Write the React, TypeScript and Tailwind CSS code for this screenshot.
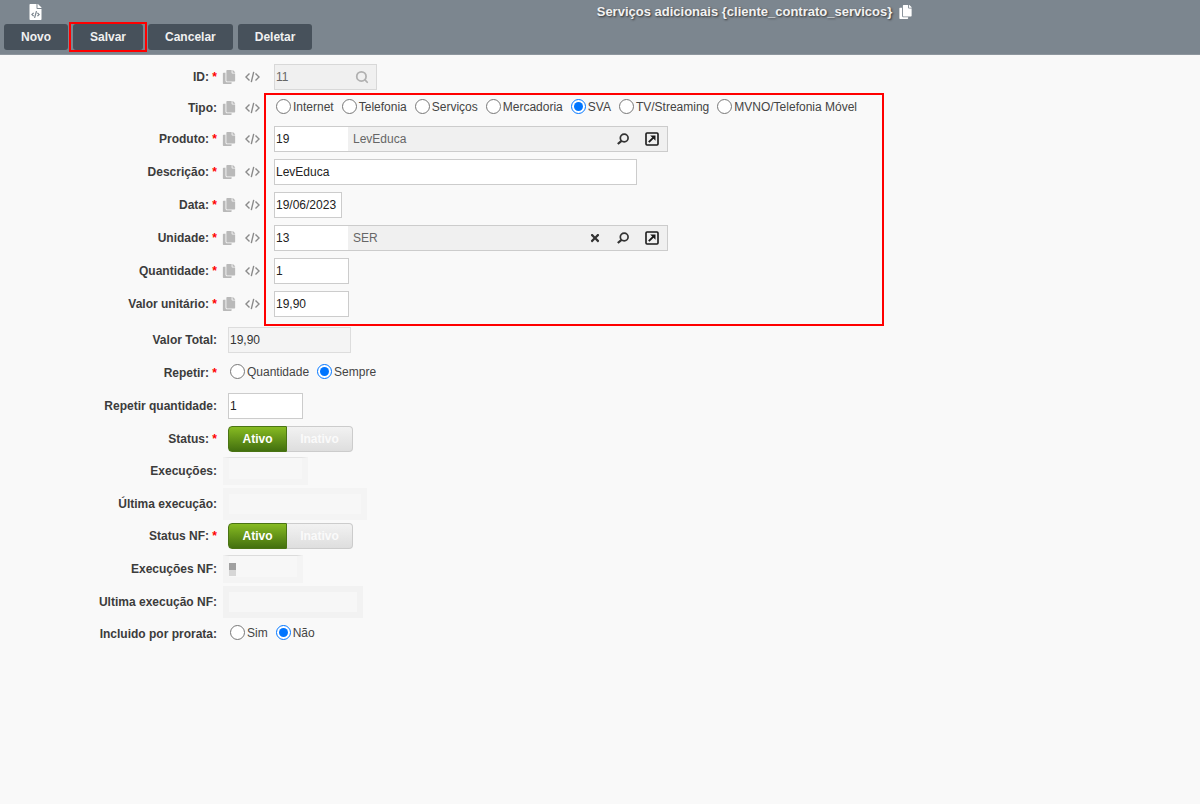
import React from 'react';
import { FaCopy, FaFileCode, FaTimes } from 'react-icons/fa';
import { Search } from 'lucide-react';

const CodeIcon = () => (
  <svg className="h-[14px] w-[15px]" viewBox="0 0 16 14" fill="none" stroke="#8a8a8a" strokeWidth="1.5">
    <path d="M4.8 3.2 1 7l3.8 3.8M11.2 3.2 15 7l-3.8 3.8M9.3 1.5 6.7 12.5" />
  </svg>
);

const LookupIcon = () => (
  <svg className="h-[12px] w-[12px]" viewBox="0 0 12 12" fill="none" stroke="#333" strokeWidth="1.7">
    <circle cx="7.2" cy="5" r="3.9" />
    <path d="M4.5 7.8 0.8 11" strokeWidth="2.2" />
  </svg>
);

const OpenIcon = () => (
  <svg className="h-[14px] w-[14px]" viewBox="0 0 14 14" fill="none" stroke="#1a1a1a" strokeWidth="1.6">
    <rect x="1" y="1" width="12" height="12" rx="1" />
    <path d="M3.8 10.2 8.6 5.4" strokeWidth="1.9" />
    <path d="M5.2 3.5h5.3v5.3z" fill="#1a1a1a" stroke="none" />
  </svg>
);

interface RowProps {
  label: string;
  htmlFor?: string;
  required?: boolean;
  tools?: boolean;
  children: React.ReactNode;
}

const Row = ({ label, htmlFor, required, tools, children }: RowProps) => (
  <div className="flex h-[26px] items-center">
    <div className="w-[217px] shrink-0 text-right text-[12px] leading-4 font-bold whitespace-nowrap text-[#3c3c3c]">
      <label htmlFor={htmlFor}>{label}:</label>
      {required && <span className="text-[#f00]"> *</span>}
    </div>
    {tools ? (
      <div className="flex w-[57px] shrink-0 items-center gap-[9px] pl-[5px]">
        <button type="button" aria-label={`Copiar ${label}`}>
          <FaCopy className="h-[14px] w-[14px] text-[#b9b9b9]" />
        </button>
        <button type="button" aria-label={`Código ${label}`}>
          <CodeIcon />
        </button>
      </div>
    ) : (
      <div className="w-[11px] shrink-0" />
    )}
    {children}
  </div>
);

const inputClass = 'h-[26px] border border-[#ccc] bg-white pl-px text-[12px] text-[#222] outline-none';

interface RadiosProps {
  name: string;
  options: string[];
  selected: string;
}

const Radios = ({ name, options, selected }: RadiosProps) => (
  <div role="radiogroup" className="flex items-center gap-2 pb-[3px] pl-[2px]">
    {options.map((option) => (
      <label key={option} className="flex items-center gap-[2px] text-[12px] whitespace-nowrap text-[#444]">
        <input type="radio" name={name} defaultChecked={option === selected} className="h-[15px] w-[15px]" />
        {option}
      </label>
    ))}
  </div>
);

interface LookupProps {
  id: string;
  code: string;
  text: string;
  clearable?: boolean;
}

const Lookup = ({ id, code, text, clearable }: LookupProps) => (
  <div className="flex h-[26px] w-[394px] items-center border border-[#ccc] bg-[#f0f0f0] pr-2">
    <input id={id} defaultValue={code} className="h-full w-[73px] bg-white pl-px text-[12px] text-[#222] outline-none" />
    <span className="flex-1 pl-[5px] text-[12px] text-[#666]">{text}</span>
    <div className="flex items-center gap-4">
      {clearable && (
        <button type="button" aria-label="Limpar">
          <FaTimes className="h-[12px] w-[12px] text-[#333]" />
        </button>
      )}
      <button type="button" aria-label="Pesquisar">
        <LookupIcon />
      </button>
      <button type="button" aria-label="Abrir">
        <OpenIcon />
      </button>
    </div>
  </div>
);

const Toggle = ({ label }: { label: string }) => (
  <div role="group" aria-label={label} className="flex h-[26px] text-[12px] font-bold">
    <button
      type="button"
      className="w-[59px] rounded-l-sm border border-[#4a7414] bg-linear-to-b from-[#87bb22] to-[#43700f] text-white"
    >
      Ativo
    </button>
    <button
      type="button"
      className="w-[66px] rounded-r-sm border border-l-0 border-[#ccc] bg-linear-to-b from-[#f2f2f2] to-[#dedede] text-[#fafafa]"
    >
      Inativo
    </button>
  </div>
);

const toolbarButton = 'h-[26px] rounded-[3px] bg-[#47515b] px-[17px] text-[12px] font-bold text-[#f0f0f0]';

export default function App() {
  return (
    <div className="min-h-screen bg-[#f9f9f9] font-['Liberation_Sans',Arial,sans-serif]">
      <header className="border-b border-[#8e969e] bg-[#7c868f] pb-1">
        <div className="flex h-6 items-center">
          <div className="w-[309px] shrink-0 pl-[29px]">
            <FaFileCode className="h-4 w-[13px] text-white" />
          </div>
          <h1 className="flex flex-1 items-center justify-center gap-[7px] text-[13px] font-bold text-[#f2f2f2] text-shadow-[1px_1px_2px_#333]">
            Serviços adicionais {'{cliente_contrato_servicos}'}
            <FaCopy className="h-[14px] w-[13px] text-white" />
          </h1>
        </div>
        <nav className="flex gap-[5px] pl-1">
          <button type="button" className={toolbarButton}>Novo</button>
          <div className="relative flex">
            <button type="button" className={toolbarButton}>Salvar</button>
            <div className="pointer-events-none absolute -inset-x-1 -inset-y-[2px] border-2 border-[#f00]" />
          </div>
          <button type="button" className={toolbarButton}>Cancelar</button>
          <button type="button" className={toolbarButton}>Deletar</button>
        </nav>
      </header>

      <form className="flex flex-col gap-[10px] pt-[9px]">
        <div className="flex flex-col gap-[5px]">
          <Row label="ID" htmlFor="id" required tools>
            <div className="flex h-[26px] w-[103px] items-center border border-[#d8d8d8] bg-[#f0f0f0] pr-[7px]">
              <input id="id" readOnly value="11" className="w-full min-w-0 bg-transparent pl-px text-[12px] text-[#666] outline-none" />
              <Search className="h-[14px] w-[14px] shrink-0 text-[#b0b0b0]" strokeWidth={3} />
            </div>
          </Row>

          {/* Highlighted fields */}
          <div className="relative flex flex-col gap-[5px]">
            <Row label="Tipo" tools>
              <Radios
                name="tipo"
                options={['Internet', 'Telefonia', 'Serviços', 'Mercadoria', 'SVA', 'TV/Streaming', 'MVNO/Telefonia Móvel']}
                selected="SVA"
              />
            </Row>
            <div className="flex flex-col gap-[7px]">
              <Row label="Produto" htmlFor="produto" required tools>
                <Lookup id="produto" code="19" text="LevEduca" />
              </Row>
              <Row label="Descrição" htmlFor="descricao" required tools>
                <input id="descricao" defaultValue="LevEduca" className={`${inputClass} w-[363px]`} />
              </Row>
              <Row label="Data" htmlFor="data" required tools>
                <input id="data" defaultValue="19/06/2023" className={`${inputClass} w-[68px]`} />
              </Row>
              <Row label="Unidade" htmlFor="unidade" required tools>
                <Lookup id="unidade" code="13" text="SER" clearable />
              </Row>
              <Row label="Quantidade" htmlFor="quantidade" required tools>
                <input id="quantidade" defaultValue="1" className={`${inputClass} w-[75px]`} />
              </Row>
              <Row label="Valor unitário" htmlFor="valor" required tools>
                <input id="valor" defaultValue="19,90" className={`${inputClass} w-[75px]`} />
              </Row>
            </div>
            <div className="pointer-events-none absolute -top-[2px] -bottom-[9px] left-[264px] w-[620px] border-2 border-[#f00]" />
          </div>
        </div>

        <div className="flex flex-col gap-[6px]">
          <div className="flex flex-col gap-[7px]">
            <Row label="Valor Total" htmlFor="total">
              <input
                id="total"
                readOnly
                value="19,90"
                className="h-[26px] w-[123px] border border-[#ddd] bg-[#f4f4f4] pl-px text-[12px] text-[#333] outline-none"
              />
            </Row>
            <Row label="Repetir" required>
              <Radios name="repetir" options={['Quantidade', 'Sempre']} selected="Sempre" />
            </Row>
            <Row label="Repetir quantidade" htmlFor="repetirQtd">
              <input id="repetirQtd" defaultValue="1" className={`${inputClass} w-[75px]`} />
            </Row>
            <Row label="Status" required>
              <Toggle label="Status" />
            </Row>
          </div>
          <div className="flex flex-col gap-[7px]">
            <Row label="Execuções" htmlFor="execucoes">
              <input id="execucoes" readOnly className="-ml-[5px] h-7 w-[85px] border-[6px] border-t border-[#f4f4f4] border-t-[#e4e4e4] bg-[#f7f7f7]" />
            </Row>
            <Row label="Última execução" htmlFor="ultima">
              <input id="ultima" readOnly className="-ml-[5px] h-8 w-[144px] border-[6px] border-[#f4f4f4] bg-[#f7f7f7]" />
            </Row>
          </div>
          <div className="flex flex-col gap-[7px]">
            <Row label="Status NF" required>
              <Toggle label="Status NF" />
            </Row>
            <Row label="Execuções NF" htmlFor="execucoesNf">
              <div className="relative -ml-[5px] flex">
                <input id="execucoesNf" readOnly className="h-7 w-[80px] border-[6px] border-t border-[#f4f4f4] border-t-[#dcdcdc] bg-[#f7f7f7]" />
                <div className="absolute top-2 left-[6px] h-[7px] w-[7px] bg-[#a0a0a0]" />
                <div className="absolute top-[15px] left-[6px] h-[6px] w-[7px] bg-[#d6d6d6]" />
              </div>
            </Row>
            <Row label="Ultima execução NF" htmlFor="ultimaNf">
              <input id="ultimaNf" readOnly className="-ml-[5px] h-8 w-[140px] border-[6px] border-[#f2f2f2] bg-[#f7f7f7]" />
            </Row>
          </div>
          <Row label="Incluido por prorata">
            <Radios name="prorata" options={['Sim', 'Não']} selected="Não" />
          </Row>
        </div>
      </form>
    </div>
  );
}
